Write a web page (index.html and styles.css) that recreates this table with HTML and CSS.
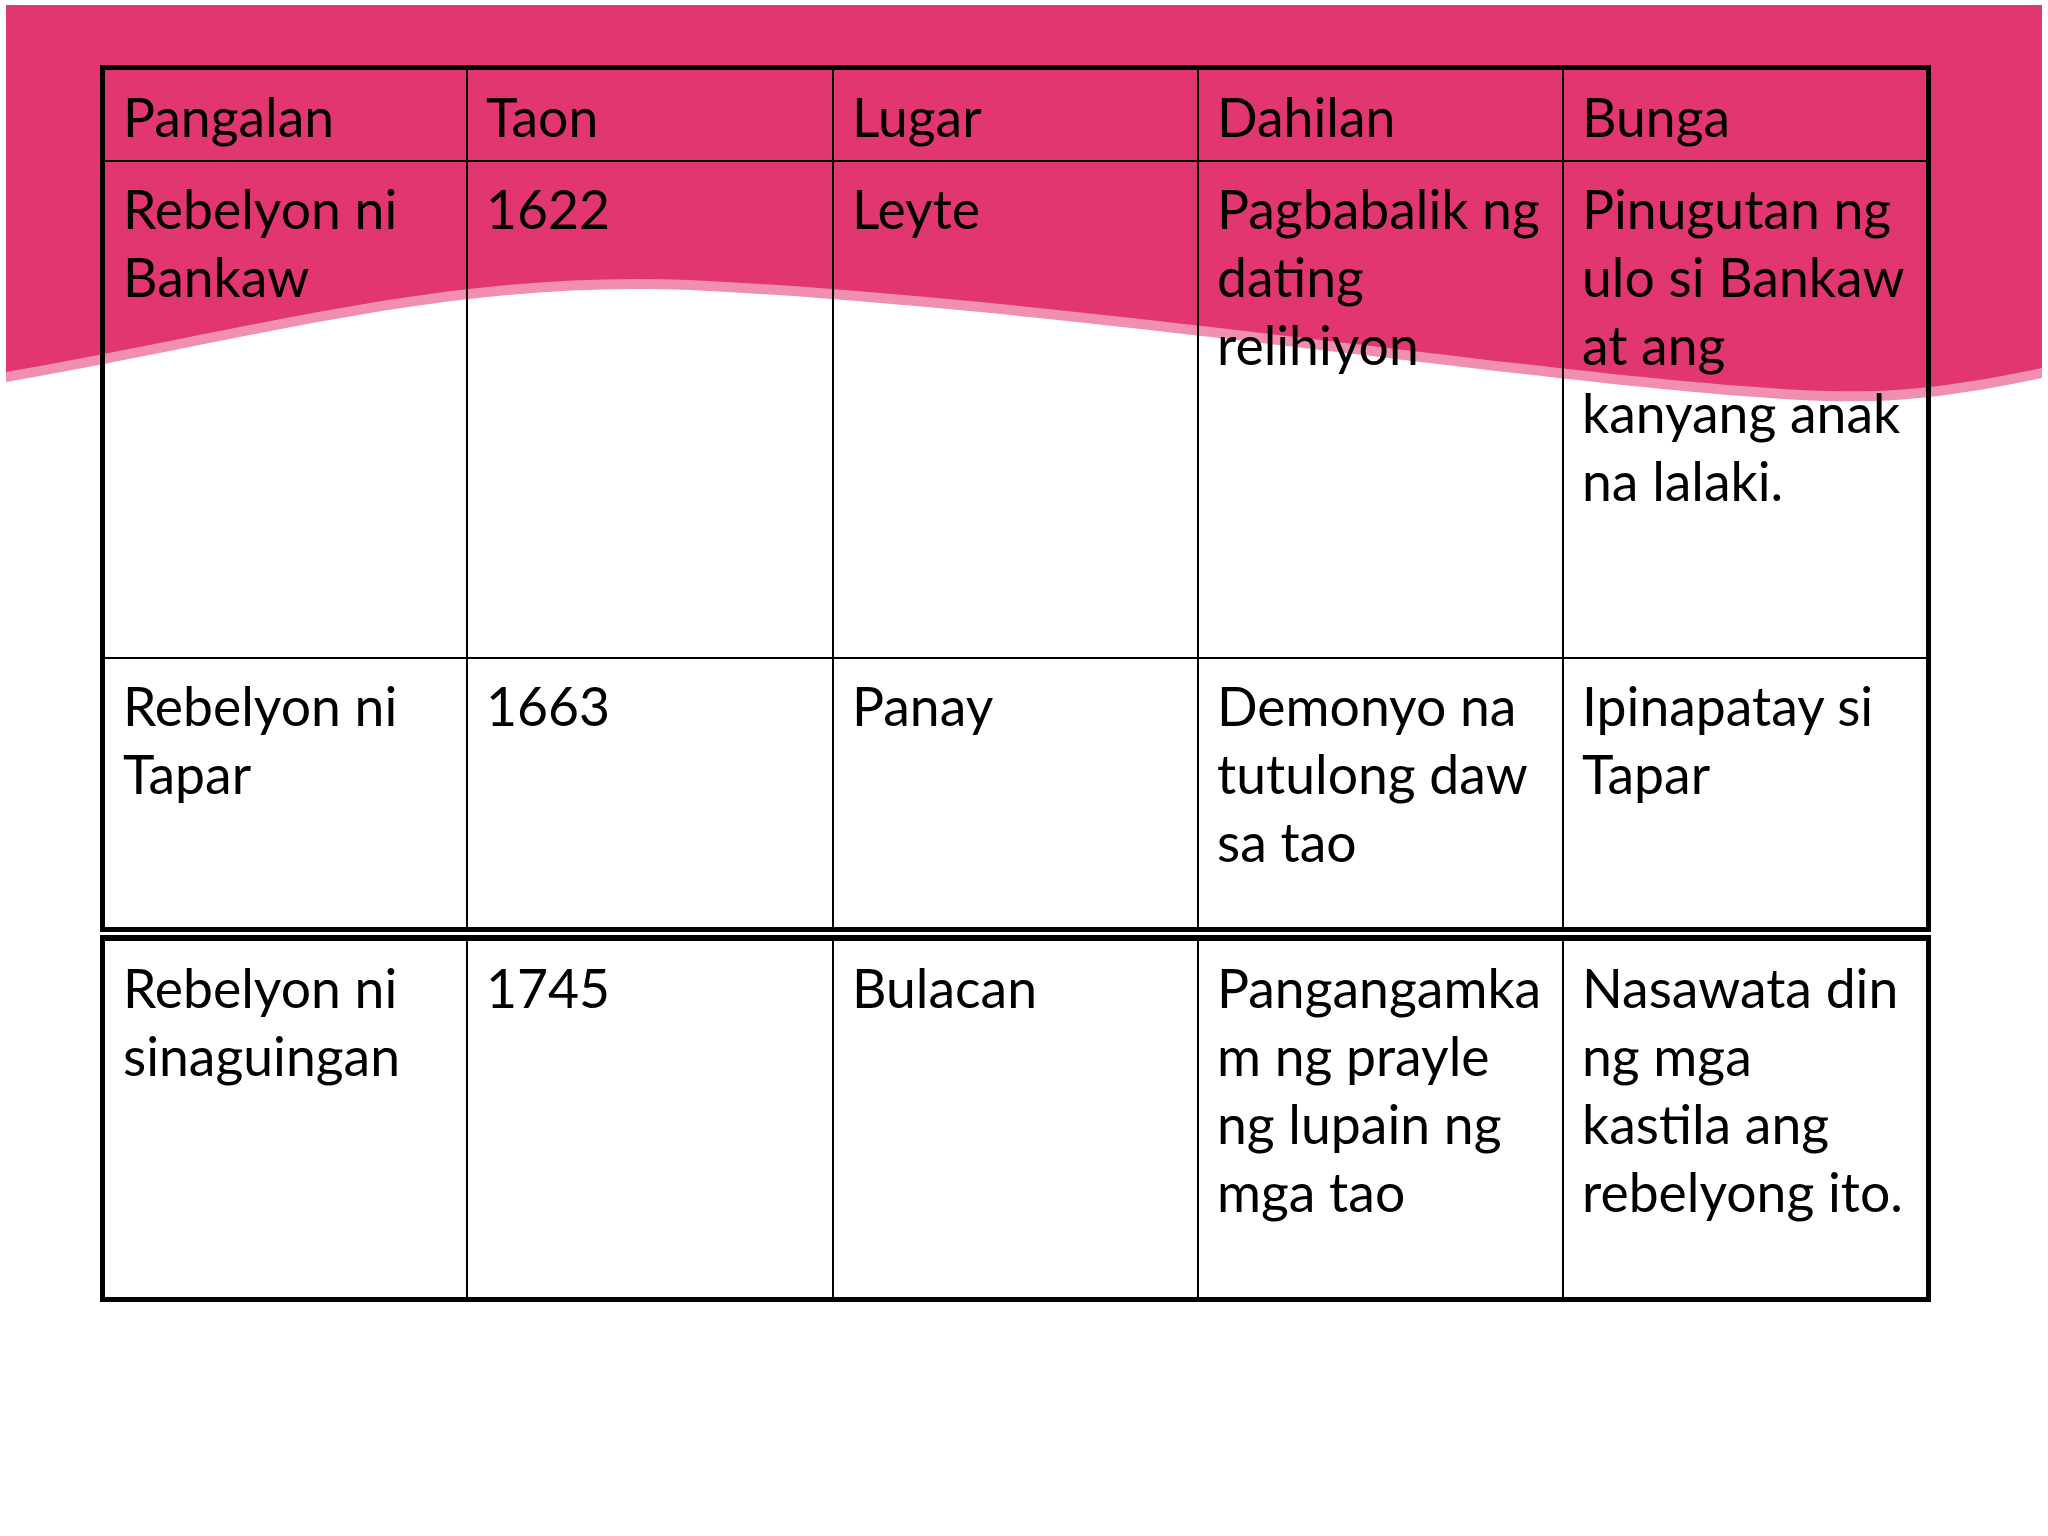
FILE: index.html
```html
<!DOCTYPE html>
<html lang="tl">
<head>
<meta charset="utf-8">
<title>Mga Rebelyon</title>
<link rel="stylesheet" href="styles.css">
</head>
<body>
<div class="slide">
  <svg class="wave" width="2048" height="1536" viewBox="0 0 2048 1536" aria-hidden="true">
    <path class="wave-shadow" d="M6,5 H2042 V368 C1960,385 1900,393 1830,391 C1600,385 1100,300 690,280 C450,270 250,330 6,372 Z" transform="translate(0,10)"/>
    <path class="wave-main" d="M6,5 H2042 V368 C1960,385 1900,393 1830,391 C1600,385 1100,300 690,280 C450,270 250,330 6,372 Z"/>
  </svg>

  <div class="tables">
    <table class="grid grid-top">
      <colgroup><col class="c1"><col class="c2"><col class="c3"><col class="c4"><col class="c5"></colgroup>
      <tr class="row-head">
        <td>Pangalan</td><td>Taon</td><td>Lugar</td><td>Dahilan</td><td>Bunga</td>
      </tr>
      <tr class="row-one">
        <td>Rebelyon ni<br>Bankaw</td>
        <td>1622</td>
        <td>Leyte</td>
        <td>Pagbabalik ng<br>dating<br>relihiyon</td>
        <td>Pinugutan ng<br>ulo si Bankaw<br>at ang<br>kanyang anak<br>na lalaki.</td>
      </tr>
      <tr class="row-two last">
        <td>Rebelyon ni<br>Tapar</td>
        <td>1663</td>
        <td>Panay</td>
        <td>Demonyo na<br>tutulong daw<br>sa tao</td>
        <td>Ipinapatay si<br>Tapar</td>
      </tr>
    </table>

    <table class="grid grid-bottom">
      <colgroup><col class="c1"><col class="c2"><col class="c3"><col class="c4"><col class="c5"></colgroup>
      <tr class="row-three last">
        <td>Rebelyon ni<br>sinaguingan</td>
        <td>1745</td>
        <td>Bulacan</td>
        <td>Pangangamka<br>m ng prayle<br>ng lupain ng<br>mga tao</td>
        <td>Nasawata din<br>ng mga<br>kastila ang<br>rebelyong ito.</td>
      </tr>
    </table>
  </div>
</div>
</body>
</html>
```

FILE: styles.css
```css
html, body {
  margin: 0;
  padding: 0;
  background: #ffffff;
}

.slide {
  position: relative;
  width: 2048px;
  height: 1536px;
  overflow: hidden;
  background: #ffffff;
}

.wave {
  position: absolute;
  left: 0;
  top: 0;
}

.wave-shadow {
  fill: #f08fb0;
}

.wave-main {
  fill: #e1366f;
}

.tables {
  position: relative;
  padding-top: 65px;
  padding-left: 100px;
  display: flex;
  flex-direction: column;
  align-items: flex-start;
}

.grid {
  width: 1831px;
  table-layout: fixed;
  border-collapse: separate;
  border-spacing: 0;
  border: 5px solid #000;
  box-sizing: border-box;
  font-family: "Lato", "Liberation Sans", sans-serif;
  font-size: 53.5px;
  line-height: 68px;
  color: #000;
}

.grid .c1 { width: 363px; }
.grid .c2 { width: 366px; }
.grid .c3 { width: 365px; }
.grid .c4 { width: 365px; }
.grid .c5 { width: 362px; }

.grid-bottom {
  margin-top: 3px;
  border-top-width: 6px;
}

.grid td {
  box-sizing: border-box;
  vertical-align: top;
  padding: 12px 6px 0 18px;
  border-right: 2px solid #000;
  border-bottom: 2px solid #000;
  white-space: nowrap;
}

.grid td:last-child {
  border-right: none;
}

.grid tr.last td {
  border-bottom: none;
}

.row-head td { height: 92px; }
.row-one td { height: 497px; }
.row-two td { height: 268px; }
.row-three td { height: 356px; }
```
